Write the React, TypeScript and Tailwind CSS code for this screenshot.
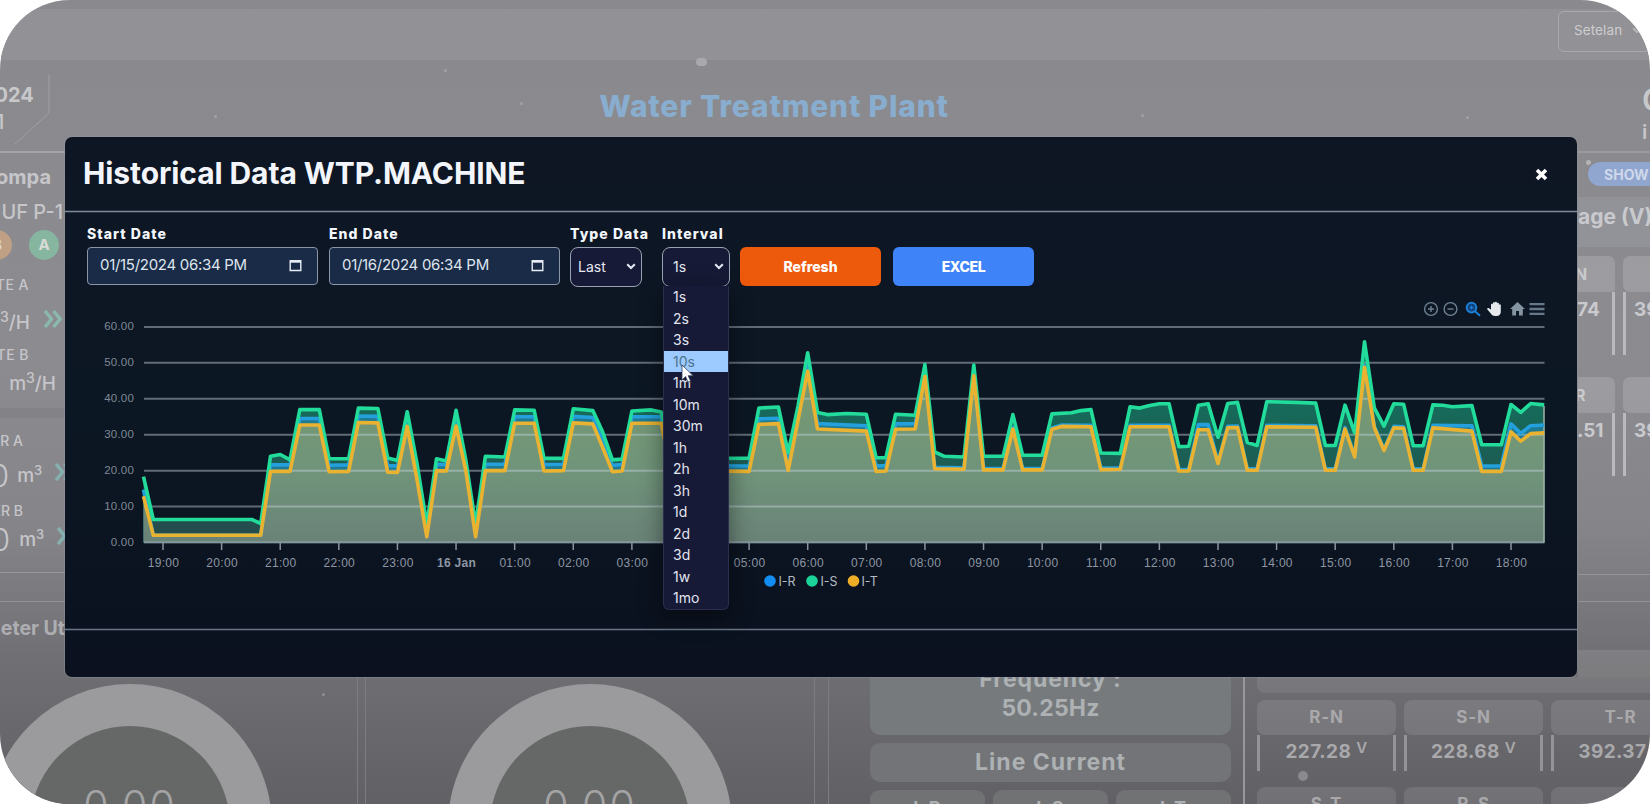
import type { ReactNode } from 'react';

type Point = [number, number];

const INTERVALS = ['1s', '2s', '3s', '10s', '1m', '10m', '30m', '1h', '2h', '3h', '1d', '2d', '3d', '1w', '1mo'];
// 04:00 sits under the open interval menu
const HOURS = [
  '19:00', '20:00', '21:00', '22:00', '23:00', '16 Jan', '01:00', '02:00', '03:00', '', '05:00', '06:00',
  '07:00', '08:00', '09:00', '10:00', '11:00', '12:00', '13:00', '14:00', '15:00', '16:00', '17:00', '18:00',
];
const Y_TICKS = [60, 50, 40, 30, 20, 10, 0];

// [10-minute step since 18:40, ampere]
const IS: Point[] = [
  [0, 18.3], [1, 6.4], [11.1, 6.4], [12, 5.3], [13, 24], [14, 24.5], [15, 23], [16, 37], [18, 37], [19, 23.3],
  [21, 23.3], [22, 37.4], [24, 37.3], [25, 23.5], [26, 22.8], [27, 36.4], [28, 22], [29, 5], [30, 23.3], [31, 22.7],
  [32, 36.8], [33, 23], [34, 5], [35, 24], [37, 23.8], [38, 36.9], [40, 36.8], [41, 23.4], [43, 23.4], [44, 37.2],
  [46, 36.7], [47, 30.8], [48, 23], [49, 23.2], [50, 36.6], [52, 36.9], [53, 36.3], [54, 24], [58, 23.4], [62, 23.5],
  [63, 37.4], [65, 37.7], [66, 25], [67, 38], [68, 52.8], [69, 36.2], [70, 35.6], [72, 35.9], [74, 35.7], [75, 23.6],
  [76, 23.6], [77, 35.7], [79, 35.4], [80, 49.5], [81, 25.2], [82, 24], [84, 23.8], [85, 49.4], [86, 24], [88, 24],
  [89, 35.6], [90, 24.3], [92, 24.3], [93, 35.8], [95, 36.1], [96, 36.7], [97, 37], [98, 24.9], [100, 24.8],
  [101, 37.8], [102, 37.4], [103, 38.1], [104, 38.6], [105, 38.6], [106, 26.7], [107, 26.8], [108, 38.2], [109, 38.6],
  [110, 29.3], [111, 38.7], [112, 39], [113, 27.8], [114, 27], [115, 39.2], [118, 39], [120, 38.8], [121, 27],
  [122, 27], [123, 38.2], [124, 30.5], [125, 55.9], [126, 37.5], [127, 32.4], [128, 38.6], [129, 38.5], [130, 26.9],
  [131, 26.9], [132, 38.3], [133, 38.2], [134, 37.8], [136, 38.1], [137, 27.2], [139, 27.2], [140, 38.4], [141, 36.2],
  [142, 38.7], [143.4, 38.3],
];
const IT: Point[] = [
  [0, 12.9], [1, 2], [12, 2], [13, 19.8], [15, 19.8], [16, 32.7], [18, 32.7], [19, 19.7], [21, 19.8], [22, 33.4],
  [24, 33.3], [25, 19.6], [26, 19.5], [27, 32.3], [28, 17.5], [29, 1.6], [30, 20], [31, 19.9], [32, 32.4], [33, 20],
  [34, 1.6], [35, 20], [37, 20], [38, 33.2], [40, 33.2], [41, 19.9], [43, 20], [44, 33.3], [46, 33], [47, 26.5],
  [48, 19.7], [49, 19.9], [50, 33.2], [53, 33.2], [54, 20], [62, 19.8], [63, 32.9], [65, 33.1], [66, 20.1], [67, 34],
  [68, 47.7], [69, 31.6], [74, 31], [75, 19.8], [76, 19.9], [77, 31.5], [79, 31.6], [80, 46.2], [81, 20.5],
  [84, 20.4], [85, 46.4], [86, 20.2], [88, 20.2], [89, 31.6], [90, 20.2], [92, 20.2], [93, 31.5], [94, 32.3],
  [97, 32.2], [98, 20.3], [100, 20.4], [101, 32.2], [105, 32.2], [106, 19.9], [107, 19.9], [108, 31.4], [109, 31.4],
  [110, 22], [111, 31.9], [112, 32], [113, 20.1], [114, 20.1], [115, 32.2], [120, 32.1], [121, 20.1], [122, 20.1],
  [123, 31.6], [124, 23.8], [125, 48.8], [126, 32], [127, 25.6], [128, 31.9], [129, 31.8], [130, 20.1], [131, 20.1],
  [132, 31.9], [136, 31], [137, 19.8], [139, 19.8], [140, 30.8], [141, 28.2], [142, 30.3], [143.4, 30.5],
];

// phase R runs just above phase T
function offset(k: number) {
  if (k > 0 && k <= 12) return 0;
  if (k < 54) return 1.8;
  if (k < 80) return 1.5;
  if (k === 108 || k === 109) return 1.4;
  if (k < 132) return 0.4;
  if (k < 134) return 0.7;
  return k <= 139 ? 1.5 : 2.2;
}
const IR: Point[] = IT.map(([k, v]) => [k, v + offset(k)]);

const px = (k: number) => 143.5 + k * 9.768 - 67;
const py = (v: number) => 542.5 - v * 3.593 - 300;
const line = (pts: Point[]) => pts.map(([k, v], i) => `${i ? 'L' : 'M'}${px(k).toFixed(1)} ${py(v).toFixed(1)}`).join('');
const area = (pts: Point[]) => `${line(pts)}L${px(143.4).toFixed(1)} ${py(0)}L${px(0)} ${py(0)}Z`;

function Chart() {
  return (
    <svg width="1508" height="296" viewBox="0 0 1508 296" className="block">
      <defs>
        <linearGradient id="fillT" x1="0" y1="0" x2="0" y2="1">
          <stop offset="0" stopColor="#779a70" />
          <stop offset="0.6" stopColor="#70947a" />
          <stop offset="1" stopColor="#6a8278" />
        </linearGradient>
        <linearGradient id="fillS" x1="0" y1="0" x2="0" y2="1">
          <stop offset="0" stopColor="#0f7a60" />
          <stop offset="1" stopColor="#254a4c" />
        </linearGradient>
      </defs>
      <path d={area(IS)} fill="url(#fillS)" />
      <path d={area(IR)} fill="#1f7b94" />
      <path d={area(IT)} fill="url(#fillT)" />
      {Y_TICKS.map((v) => (
        <g key={v}>
          <line x1="77" x2="1477.5" y1={py(v)} y2={py(v)} stroke="#c8d2dc" strokeOpacity="0.45" strokeWidth="2" />
          <text x="67" y={py(v) + 3} textAnchor="end" fontSize="11.5" fill="#7f8995" letterSpacing="0.2">
            {v.toFixed(2)}
          </text>
        </g>
      ))}
      <line x1="1477" x2="1477" y1={py(38)} y2={py(0)} stroke="#9fb3a4" strokeWidth="1.5" />
      <g fill="none" strokeWidth="3.6" strokeLinejoin="round">
        <path d={line(IR)} stroke="#24a0dc" />
        <path d={line(IS)} stroke="#22dc9b" />
        <path d={line(IT)} stroke="#eab231" />
      </g>
      {HOURS.map((h, i) => (
        <g key={i}>
          <line x1={96 + i * 58.61} x2={96 + i * 58.61} y1="243" y2="250" stroke="#8a94a0" strokeWidth="1.5" />
          {h && (
            <text
              x={96.5 + i * 58.61}
              y="266.5"
              textAnchor="middle"
              fontSize="12"
              fontWeight={h === '16 Jan' ? 700 : 400}
              fill="#8d97a3"
              letterSpacing="0.3"
            >
              {h}
            </text>
          )}
        </g>
      ))}
      <g className="font-[Inter,sans-serif]" fontSize="12.5" fill="#b3bbc6">
        <circle cx="703" cy="281" r="5.8" fill="#128ef2" />
        <text x="711.5" y="285.5">I-R</text>
        <circle cx="745" cy="281" r="5.8" fill="#1ad49a" />
        <text x="753.5" y="285.5">I-S</text>
        <circle cx="786.5" cy="281" r="5.8" fill="#efae27" />
        <text x="794.5" y="285.5">I-T</text>
      </g>
    </svg>
  );
}

function Toolbar() {
  return (
    <svg width="124" height="20" viewBox="0 0 124 20" className="block">
      <g fill="none" stroke="#6e8192" strokeWidth="1.4">
        <circle cx="9" cy="10" r="6.4" />
        <path d="M6 10h6M9 7v6" />
        <circle cx="28.5" cy="10" r="6.4" />
        <path d="M25.5 10h6" />
      </g>
      <g fill="none" stroke="#1d7fd6" strokeWidth="2">
        <circle cx="49.5" cy="8.6" r="4.8" fill="#0f3f76" />
        <path d="M53 12.2l5 4.6" />
        <path d="M47.5 8.6h4M49.5 6.6v4" strokeWidth="1.2" />
      </g>
      <path
        d="M69 8.2V5.6c0-1.3 1.9-1.3 1.9 0V4.2c0-1.3 2-1.3 2 0v-.6c0-1.3 2-1.3 2 0v1c0-1.3 2-1.3 2 0l.1 1.4c.1-1 1.8-1 1.8.2v6.6c0 2.7-1.6 4.2-4.2 4.2h-1.8c-1.6 0-2.5-.6-3.4-1.7l-4-4.8c-.7-1 .6-1.9 1.5-1.3l2.1 1.2z"
        fill="#e6e9ec"
      />
      <path d="M95.5 3l-7.5 6.9h2.200V16.500h3.800v-4.600h3v4.600h3.800V9.900h2.200z" fill="#8695a2" />
      <path d="M107.5 5.2h15M107.500 10h15M107.500 14.800h15" stroke="#66788a" strokeWidth="2.3" />
    </svg>
  );
}

function Chevron({ className = '' }: { className?: string }) {
  return (
    <svg width="10" height="7" viewBox="0 0 10 7" fill="none" stroke="currentColor" strokeWidth="2" className={className}>
      <path d="M1.2 1.2L5 5l3.8-3.8" />
    </svg>
  );
}

function DateInput({ value }: { value: string }) {
  return (
    <div className="flex h-[38px] w-[231px] items-center justify-between rounded-[4px] border-[1.5px] border-[#8a95a6] bg-[#192b47] pr-[15px] pb-[2px] pl-[12px] text-[15px] tracking-[-0.3px] text-[#dfe5ee]">
      <span>{value}</span>
      <svg width="13" height="14" viewBox="0 0 13 14" fill="none" stroke="#e8edf5" strokeWidth="1.4">
        <path d="M1.2 2.7h10.6v9.8H1.2z" />
        <path d="M1.2 3.5h10.6" strokeWidth="2.4" />
      </svg>
    </div>
  );
}

function Field({ label, children }: { label: string; children: ReactNode }) {
  return (
    <div className="flex w-0 flex-col whitespace-nowrap">
      <span className="h-[22px] text-[14px] leading-[17px] font-extrabold tracking-[1.05px] text-[#f3f6fa]">{label}</span>
      {children}
    </div>
  );
}

function Modal() {
  return (
    <div className="flex h-[540px] w-[1512px] flex-col rounded-[7px] bg-gradient-to-b from-[#0e1624] via-[#0c1724] to-[#0b111e] shadow-[0_0_0_1px_rgba(150,155,170,0.35)]">
      <div className="flex h-[73px] items-center justify-between pr-[29px] pl-[18px]">
        <h2 className="-mt-[2px] text-[30px] leading-none font-bold tracking-[-0.1px] text-[#f2f5fa]">
          Historical Data WTP.MACHINE
        </h2>
        <svg width="13" height="13" viewBox="0 0 13 13" stroke="#fff" strokeWidth="3.6" className="translate-y-[1px]">
          <path d="M2 2l9 9M11 2l-9 9" />
        </svg>
      </div>
      <div className="h-[3px] shrink-0 border-y border-t-[#2c3645] border-b-[#2c3645] bg-[#7c8797]" />
      <div className="h-[415px] pt-[12px]">
        <div className="grid grid-cols-[242px_241px_92px_78px_153px_auto] pl-[22px]">
          <Field label="Start Date">
            <DateInput value="01/15/2024 06:34 PM" />
          </Field>
          <Field label="End Date">
            <DateInput value="01/16/2024 06:34 PM" />
          </Field>
          <Field label="Type Data">
            <div className="flex h-[40px] w-[72px] items-center justify-between rounded-[8px] border-[1.5px] border-[#9aa1b2] bg-[#171a36] pr-[5px] pb-[2px] pl-[7px] text-[14px] text-[#e6e9f2]">
              Last
              <Chevron />
            </div>
          </Field>
          <Field label="Interval">
            <div className="relative">
              <div className="flex h-[40px] w-[68px] items-center justify-between rounded-[8px] border-[1.5px] border-[#9aa1b2] bg-[#171a36] pr-[5px] pb-[2px] pl-[10px] text-[14px] text-[#e6e9f2]">
                1s
                <Chevron />
              </div>
              <ul className="absolute top-[39px] left-[1px] z-10 h-[324px] w-[66px] rounded-b-[6px] border border-t-0 border-[#2b2e4c] bg-[#171a37] shadow-[0_6px_24px_rgba(0,0,0,0.45)]">
                {INTERVALS.map((item) => (
                  <li
                    key={item}
                    className={
                      item === '10s'
                        ? 'h-[21.5px] bg-[#9dcbff] pl-[9px] text-[14px] leading-[21.5px] text-[#4d7590]'
                        : 'h-[21.5px] pl-[9px] text-[14px] leading-[21.5px] text-[#e2e5f0]'
                    }
                  >
                    {item}
                  </li>
                ))}
              </ul>
              <svg width="13" height="20" viewBox="0 0 13 20" className="absolute top-[117px] left-[19px] z-20">
                <path d="M1 1v15l3.6-3.4 2.4 5.6 2.6-1.1-2.4-5.4h5z" fill="#fff" stroke="#33415c" strokeWidth="0.8" />
              </svg>
            </div>
          </Field>
          <button className="mt-[22px] h-[39px] w-[141px] rounded-[6px] bg-[#ee5a0b] text-[14px] font-extrabold text-white">
            Refresh
          </button>
          <button className="mt-[22px] h-[39px] w-[141px] rounded-[6px] bg-[#3f83f8] text-[14px] font-extrabold tracking-[-0.3px] text-white">
            EXCEL
          </button>
        </div>
        <div className="mt-[12px] -mb-[19px] flex justify-end pr-[31px]">
          <Toolbar />
        </div>
        <div className="pl-[2px] font-['Liberation_Sans',sans-serif]">
          <Chart />
        </div>
      </div>
      <div className="h-[3px] shrink-0 border-y border-t-[#232d3b] border-b-[#232d3b] bg-[#687383]" />
    </div>
  );
}

function Arrows({ className }: { className: string }) {
  return (
    <svg width="20" height="18" viewBox="0 0 20 18" fill="none" stroke="currentColor" strokeWidth="3.5" className={className}>
      <path d="M2 1l6.5 8L2 17M10.5 1l6.5 8-6.5 8" />
    </svg>
  );
}

function LeftPanel() {
  return (
    <div className="flex h-[526px] w-[65px] flex-col overflow-hidden whitespace-nowrap border-t-2 border-[#a3a3a8] text-[#c6c6ca]">
      <div className="flex h-[48px] items-center justify-end pr-[14px] text-[20px] font-bold">Pompa</div>
      <div className="flex h-[22px] items-center justify-end pr-[2px] text-[20px] font-medium">UF P-1</div>
      <div className="mt-[7px] flex h-[31px] justify-end gap-[17px] pr-[6px] text-[15px] font-bold text-[#dadbd8]">
        <span className="flex size-[30px] shrink-0 items-center justify-center rounded-full bg-[#c0a084]">B</span>
        <span className="flex size-[30px] shrink-0 items-center justify-center rounded-full bg-[#86b5a0]">A</span>
      </div>
      <div className="mt-[13px] flex h-[20px] items-center justify-end pr-[36px] text-[14px] font-medium tracking-[0.5px]">RATE A</div>
      <div className="mt-[14px] flex h-[30px] items-center justify-end gap-[13px] pr-[2px] text-[19px] font-medium">
        <span>
          m<sup className="text-[14px]">3</sup>/H
        </span>
        <Arrows className="shrink-0 -translate-y-1 text-[#8ab8ab]" />
      </div>
      <div className="mt-[6px] flex h-[20px] items-center justify-end pr-[36px] text-[14px] font-medium tracking-[0.5px]">RATE B</div>
      <div className="mt-[5px] flex h-[30px] items-center justify-end pr-[9px] text-[19px] font-medium">
        <span>
          m<sup className="text-[14px]">3</sup>/H
        </span>
      </div>
      <div className="mt-[9px] flex h-[165px] shrink-0 flex-col border-t-[10px] border-b border-t-[#838287] border-b-[#98979c]">
        <div className="mt-[12px] flex h-[20px] items-center justify-end pr-[42px] text-[14px] font-medium">METER A</div>
        <div className="mt-[9px] flex h-[34px] shrink-0 items-center text-[19px] font-medium">
          <span className="-ml-[10px] text-[31px] font-light">0</span>
          <span className="ml-[8px]">
            m<sup className="text-[13px]">3</sup>
          </span>
          <Arrows className="ml-[12px] shrink-0 -translate-y-1 text-[#84b0b0]" />
        </div>
        <div className="mt-[7px] flex h-[20px] items-center justify-end pr-[42px] text-[14px] font-medium">METER B</div>
        <div className="mt-[3px] flex h-[34px] shrink-0 items-center text-[19px] font-medium">
          <span className="-ml-[9px] text-[31px] leading-[34px] font-light">0</span>
          <span className="ml-[9px]">
            m<sup className="text-[13px]">3</sup>
          </span>
          <Arrows className="ml-[12px] shrink-0 -translate-y-1 text-[#84b0b0]" />
        </div>
      </div>
      <div className="h-[29px] shrink-0 border-b border-[#929196]" />
      <div className="mt-[12px] flex h-[30px] items-center justify-end text-[19.5px] font-bold text-[#aeaeb2]">Meter Ut</div>
    </div>
  );
}

function SideCells({ head, value }: { head: string; value: string }) {
  return (
    <div className="flex w-[160px] gap-[8px]">
      <div className="w-[37px]">
        <div className="flex h-[36px] items-center rounded-tr-[7px] rounded-br-[4px] bg-white/15 text-[16px] font-bold">
          <span className="-ml-[3px]">{head}</span>
        </div>
        <div className="flex h-[63px] border-r-[3px] border-[#b9babd] pt-[7px] text-[19px] leading-[22px] font-bold">
          <span className="-ml-[1px]">{value}</span>
        </div>
      </div>
      <div className="w-[110px]">
        <div className="h-[36px] rounded-[7px] bg-white/15" />
        <div className="h-[63px] border-l-[3px] border-[#b9babd] pt-[7px] pl-[8px] text-[19px] leading-[22px] font-bold">392</div>
      </div>
    </div>
  );
}

function RightPanel() {
  return (
    <div className="h-[526px] w-[72px] overflow-hidden whitespace-nowrap border-t-2 border-[#9b9a9f] text-[#c9cacd]">
      <div className="mt-[9px] ml-[10px] flex h-[24px] w-[90px] items-center rounded-full bg-[#90a6cf] pl-[16px] text-[14px] font-bold text-[#cfd8ea]">
        SHOW
      </div>
      <div className="mt-[11px] mb-[9px] flex h-[50px] bg-[#929299] pt-[8px] text-[21px] font-bold leading-[24px]">
        <span>age (V)</span>
      </div>
      <SideCells head="N" value="74" />
      <div className="h-[22px]" />
      <SideCells head="R" value=".51" />
      <div className="mt-[98px] h-[28px] border-y border-[#949398]" />
      <div className="mt-[48px] h-[42px] bg-white/10" />
    </div>
  );
}

function Gauge() {
  return (
    <div className="flex h-[120px] w-[284px] justify-center overflow-hidden">
      <div className="flex size-[284px] shrink-0 justify-center rounded-full border-[42px] border-[#9b9b9d] bg-[#666767] pt-[53px] text-[41px] leading-[52px] font-light tracking-[2px] text-[#a4a4a5]">
        0.00
      </div>
    </div>
  );
}

function Cell({ head, value }: { head: string; value?: string }) {
  return (
    <div className="w-[139px] shrink-0 text-[17px] font-bold text-[#a9a9ac]">
      <div className="flex h-[35px] items-center justify-center rounded-[8px] bg-white/10 tracking-[0.8px]">{head}</div>
      {value && (
        <div className="flex h-[36px] justify-center gap-[5px] border-x-[3px] border-[#949497] pt-[5px] text-[19px] leading-[24px] tracking-[0.4px]">
          {value}
          <span className="text-[15px] leading-[16px] font-semibold">V</span>
        </div>
      )}
    </div>
  );
}

function BottomRow() {
  return (
    <div className="flex h-[127px] w-[1650px] overflow-hidden">
      <div className="-ml-[12px] flex h-full w-[370px] shrink-0 items-end border-r border-[#7d7c80]">
        <Gauge />
      </div>
      <div className="ml-[7px] flex h-full w-[450px] shrink-0 items-end justify-center border-x border-[#7d7c80]">
        <Gauge />
      </div>
      <div className="ml-[13px] flex w-[417px] shrink-0 flex-col border-r-2 border-l border-l-[#7d7c80] border-r-[#98989b] pr-[12px] pl-[41px] text-center font-bold text-[#adb1b3]">
        <div className="h-[58px] shrink-0 rounded-b-[10px] bg-[#767a7d] text-[23px] leading-[29px]">
          <div className="-mt-[12px] tracking-[0.9px]">Frequency :</div>
          <div className="tracking-[0.2px]">50.25Hz</div>
        </div>
        <div className="mt-[8px] flex h-[39px] shrink-0 items-center justify-center rounded-[10px] bg-[#727477] text-[23px] tracking-[1px]">
          Line Current
        </div>
        <div className="mt-[8px] grid shrink-0 grid-cols-3 gap-[8px] text-[18px] leading-[24px]">
          {['I-R', 'I-S', 'I-T'].map((t) => (
            <div key={t} className="h-[36px] rounded-[9px] bg-[#717274] pt-[6px] tracking-[1px]">
              {t}
            </div>
          ))}
        </div>
      </div>
      <div className="relative ml-[12px] shrink-0">
        <div className="h-[16px] rounded-b-[8px] bg-white/8" />
        <div className="mt-[7px] flex gap-[8px]">
          <Cell head="R-N" value="227.28" />
          <Cell head="S-N" value="228.68" />
          <Cell head="T-R" value="392.37" />
        </div>
        <div className="mt-[16px] flex gap-[8px]">
          <Cell head="S-T" />
          <Cell head="R-S" />
          <Cell head="" />
        </div>
        <span className="absolute top-[94px] left-[41px] size-[10px] rounded-full bg-[#8a8a8d]" />
      </div>
    </div>
  );
}

export default function App() {
  return (
    <div className="h-[804px] w-[1650px] bg-white font-[Inter,sans-serif]">
      <div className="relative flex h-[804px] flex-col overflow-hidden rounded-[70px] bg-[linear-gradient(180deg,#8a898d_0%,#8c8b90_45%,#858489_66%,#706f73_82%,#616065_100%)] pt-[9px]">
        <div className="flex h-[51px] shrink-0 justify-end bg-[#929195] pt-[2px]">
          <div className="-mr-[20px] flex h-[41px] w-[112px] items-center gap-[10px] rounded-[6px] border-[1.5px] border-[#a9a9ad] pb-[2px] pl-[15px] text-[13.5px] tracking-[0.1px] text-[#cdcdd0]">
            Setelan
            <Chevron className="shrink-0 opacity-60" />
          </div>
        </div>
        <div className="flex h-[91px] shrink-0 justify-between">
          <div className="relative flex w-[65px] flex-col items-start overflow-hidden text-[20px] font-bold text-[#c8c8cb]">
            <svg width="65" height="92" viewBox="0 0 65 92" fill="none" stroke="#a1a1a5" className="absolute top-0 left-0">
              <path d="M49 15v38L15 84" />
            </svg>
            <span className="mt-[22px] -ml-[18px] leading-[27px]">2024</span>
            <span className="-ml-[4px] leading-[27px] font-medium">1</span>
          </div>
          <h1 className="mt-[28px] -ml-[159px] text-[30px] leading-[36px] font-extrabold tracking-[0.8px] text-[#88adcf]">
            Water Treatment Plant
          </h1>
          <div className="w-[8px] overflow-hidden pt-[22px] text-[#c8c8cb]">
            <div className="text-[31px] leading-[36px] font-semibold">C</div>
            <div className="text-[20px] leading-[28px] font-semibold">i</div>
          </div>
        </div>
        <div className="flex h-[526px] shrink-0 justify-between">
          <LeftPanel />
          <RightPanel />
        </div>
        <BottomRow />

        {/* floating particles */}
        <span className="absolute top-[58px] left-[696px] h-[8px] w-[11px] rounded-full bg-[#a9a8ac]" />
        <span className="absolute top-[160px] left-[1586px] size-[5px] rounded-full bg-[#b4b3b7]" />
        <span className="absolute top-[115px] left-[214px] size-[3px] rounded-full bg-[#a3a2a6]" />
        <span className="absolute top-[69px] left-[444px] size-[3px] rounded-full bg-[#a3a2a6]" />
        <span className="absolute top-[102px] left-[520px] size-[3px] rounded-full bg-[#a3a2a6]" />
        <span className="absolute top-[114px] left-[1141px] size-[3px] rounded-full bg-[#a3a2a6]" />
        <span className="absolute top-[116px] left-[1466px] size-[3px] rounded-full bg-[#a3a2a6]" />
        <span className="absolute top-[693px] left-[322px] size-[3px] rounded-full bg-[#919095]" />

        <div className="absolute inset-0 flex justify-center pt-[137px] pr-[8px]">
          <Modal />
        </div>
      </div>
    </div>
  );
}
